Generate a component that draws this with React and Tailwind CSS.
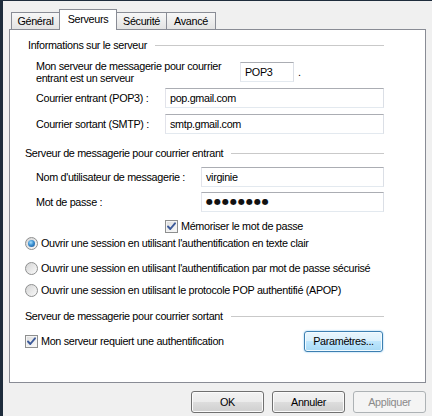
import React from "react";

function Input({ value, className = "", password = false }) {
  return (
    <div
      className={
        "h-[20px] border border-[#abadb3] border-l-[#e2e3ea] border-r-[#dbdfe6] border-b-[#e3e9ef] bg-white flex items-center pl-[4px] " +
        className
      }
    >
      {password ? (
        <span className="text-[8px] tracking-[1px] leading-none font-['DejaVu_Sans',sans-serif] text-[#111]">
          ●●●●●●●●
        </span>
      ) : (
        <span>{value}</span>
      )}
    </div>
  );
}

function Checkbox() {
  return (
    <div className="w-[13px] h-[13px] shrink-0 border border-[#8e8f8f] bg-[linear-gradient(135deg,#dcdcdc,#fbfbfb)] shadow-[inset_0_0_0_1px_#f4f4f4] flex items-center justify-center">
      <svg width="11" height="11" viewBox="0 0 11 11">
        <path d="M2 5.5 L4.3 8 L9 2.3" fill="none" stroke="#3c5a9a" strokeWidth="1.9" strokeLinecap="round" strokeLinejoin="round" />
      </svg>
    </div>
  );
}

function Radio({ checked }) {
  return (
    <div className="w-[13px] h-[13px] shrink-0 rounded-full border border-[#8e8f8f] bg-[linear-gradient(135deg,#d4d4d4,#fafafa)] flex items-center justify-center">
      {checked && (
        <div className="w-[7px] h-[7px] rounded-full bg-[radial-gradient(circle_at_40%_35%,#a6e0ff_0%,#3a8fd0_45%,#1c4f8f_100%)]" />
      )}
    </div>
  );
}

function Header({ children, pl }) {
  return (
    <div className={"h-[14px] flex items-center " + pl}>
      <span className="whitespace-nowrap">{children}</span>
      <div className="flex-1 h-px bg-[#c9c9c9] ml-[8px]" />
    </div>
  );
}

function Button({ children, variant = "normal" }) {
  const base = "w-[73px] h-[22px] rounded-[3px] border flex items-center justify-center";
  if (variant === "disabled")
    return <div className={base + " border-[#adb2b5] bg-[#f4f4f4] text-[#8a8a8a]"}>{children}</div>;
  return (
    <div
      className={
        base +
        " border-[#707070] bg-[linear-gradient(to_bottom,#f2f2f2_0%,#ebebeb_50%,#dddddd_50%,#cfcfcf_100%)] shadow-[inset_0_0_0_1px_#fbfbfb]"
      }
    >
      {children}
    </div>
  );
}

export default function App() {
  return (
    <div className="w-[432px] h-[416px] bg-[#f0f0f0] border-t border-l-[3px] border-[#1e2c3c] text-[10.8px] tracking-[-0.33px] text-black font-['Liberation_Sans',Arial,sans-serif] flex flex-col overflow-hidden">
      {/* Tabs */}
      <div className="h-[28px] flex items-end pl-[8px] shrink-0">
        <div className="w-[49px] h-[17px] border border-b-0 border-[#898c95] bg-[linear-gradient(to_bottom,#f7f7f7,#e3e3e3)] flex items-center justify-center">
          Général
        </div>
        <div className="relative z-10 -ml-px -mb-px w-[58px] h-[21px] border border-b-0 border-[#898c95] bg-white flex items-center justify-center pb-[2px]">
          Serveurs
        </div>
        <div className="-ml-px w-[51px] h-[17px] border border-b-0 border-[#898c95] bg-[linear-gradient(to_bottom,#f7f7f7,#e3e3e3)] flex items-center justify-center">
          Sécurité
        </div>
        <div className="-ml-px w-[50px] h-[17px] border border-b-0 border-[#898c95] bg-[linear-gradient(to_bottom,#f7f7f7,#e3e3e3)] flex items-center justify-center">
          Avancé
        </div>
      </div>

      {/* Panel */}
      <div className="ml-[6px] w-[417px] h-[354px] shrink-0 border border-[#898c95] bg-white flex flex-col pt-[8px] pr-[41px] whitespace-nowrap">
        <Header pl="pl-[18px]">Informations sur le serveur</Header>

        <div className="mt-[8px] h-[24px] flex items-center pl-[26px]">
          <div className="w-[204px] shrink-0 leading-[12px]">
            Mon serveur de messagerie pour courrier
            <br />
            entrant est un serveur
          </div>
          <Input value="POP3" className="w-[54px]" />
          <span className="ml-[4px]">.</span>
        </div>

        <div className="mt-[4px] h-[20px] flex items-center pl-[26px]">
          <div className="w-[129px] shrink-0">Courrier entrant (POP3) :</div>
          <Input value="pop.gmail.com" className="flex-1" />
        </div>

        <div className="mt-[6px] h-[20px] flex items-center pl-[26px]">
          <div className="w-[129px] shrink-0">Courrier sortant (SMTP) :</div>
          <Input value="smtp.gmail.com" className="flex-1" />
        </div>

        <div className="mt-[12px]">
          <Header pl="pl-[15px]">Serveur de messagerie pour courrier entrant</Header>
        </div>

        <div className="mt-[7px] h-[20px] flex items-center pl-[26px]">
          <div className="w-[165px] shrink-0">Nom d'utilisateur de messagerie :</div>
          <Input value="virginie" className="flex-1" />
        </div>

        <div className="mt-[5px] h-[20px] flex items-center pl-[26px]">
          <div className="w-[165px] shrink-0">Mot de passe :</div>
          <Input password className="flex-1" />
        </div>

        <div className="mt-[7px] h-[14px] flex items-center pl-[155px]">
          <Checkbox />
          <span className="ml-[3px]">Mémoriser le mot de passe</span>
        </div>

        <div className="mt-[3px] h-[14px] flex items-center pl-[15px]">
          <Radio checked />
          <span className="ml-[3px]">Ouvrir une session en utilisant l'authentification en texte clair</span>
        </div>

        <div className="mt-[11px] h-[14px] flex items-center pl-[15px]">
          <Radio />
          <span className="ml-[3px]">Ouvrir une session en utilisant l'authentification par mot de passe sécurisé</span>
        </div>

        <div className="mt-[8px] h-[14px] flex items-center pl-[15px]">
          <Radio />
          <span className="ml-[3px]">Ouvrir une session en utilisant le protocole POP authentifié (APOP)</span>
        </div>

        <div className="mt-[12px]">
          <Header pl="pl-[15px]">Serveur de messagerie pour courrier sortant</Header>
        </div>

        <div className="mt-[8px] h-[21px] flex items-center pl-[15px]">
          <Checkbox />
          <span className="ml-[3px]">Mon serveur requiert une authentification</span>
          <div className="ml-auto mr-[1px] w-[79px] h-[21px] rounded-[3px] border border-[#3c7fb1] bg-[linear-gradient(to_bottom,#eaf6fd_0%,#d9f0fc_50%,#bee6fd_50%,#a7d9f5_100%)] shadow-[0_0_2px_#7fc3ef,inset_0_0_0_1px_#f2fbff] flex items-center justify-center">
            Paramètres...
          </div>
        </div>
      </div>

      {/* Bottom buttons */}
      <div className="mt-[8px] flex justify-end gap-[8px] pr-[6px]">
        <Button>OK</Button>
        <Button>Annuler</Button>
        <Button variant="disabled">Appliquer</Button>
      </div>
    </div>
  );
}
